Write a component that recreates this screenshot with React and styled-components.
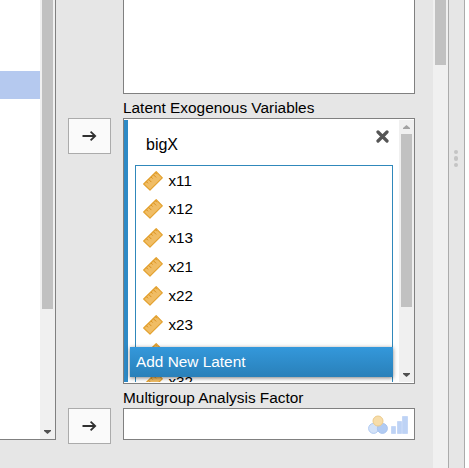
import React from "react";
import styled, { createGlobalStyle } from "styled-components";

const GlobalStyle = createGlobalStyle`
  * { box-sizing: border-box; }
  body { margin: 0; background: #fff; }
`;

const Screen = styled.div`
  display: flex;
  width: 469px;
  height: 468px;
  overflow: hidden;
  background: #fff;
  color: #000;
  font: 15.4px/18px "Liberation Sans", Arial, sans-serif;
`;

const Form = styled.main`
  display: flex;
  width: 433px;
  background: #e6e6e6;
`;

const SourceList = styled.div`
  display: flex;
  width: 56px;
  height: 440px;
  background: #fff;
  border: solid #808080;
  border-width: 0 1px 1px 0;
`;

const SourceItems = styled.div`
  flex: 1;
  padding-top: 71px;
`;

const SelectedItem = styled.div`
  height: 28px;
  background: #b5c9ef;
`;

const Track = styled.div`
  display: flex;
  flex-direction: column;
  flex: none;
  width: 15px;
  height: 100%;
  background: #f0f0f0;
`;

const Thumb = styled.div`
  width: 11px;
  height: ${(p) => p.$length}px;
  margin-left: 2px;
  background: #c1c1c1;
`;

const ArrowCap = styled.svg`
  display: block;
  flex: none;
  width: 15px;
  height: 14px;
  margin-top: ${(p) => (p.$end ? "auto" : "0")};
  fill: ${(p) => (p.$end ? "#505050" : "#a3a3a3")};
`;

const Assign = styled.div`
  display: flex;
  flex-direction: column;
  gap: 254px;
  padding: 118px 12px 0;
`;

const AssignButton = styled.button`
  display: flex;
  align-items: center;
  justify-content: center;
  width: 43px;
  height: 36px;
  padding: 0;
  background: #fafafa;
  border: 1px solid #ababab;
`;

const Fields = styled.section`
  width: 292px;
`;

const Box = styled.div`
  display: flex;
  height: ${(p) => p.$height}px;
  background: #fff;
  border: 1px solid #808080;
  ${(p) => p.$cut && "border-top: 0;"}
`;

const Label = styled.div`
  height: 24px;
  padding-top: 5px;
  white-space: nowrap;
`;

const LatentBox = styled(Box)`
  position: relative;
  padding: 1px 0;
  overflow: hidden;
`;

const Latent = styled.div`
  flex: 1;
  height: 262px;
  padding: 0 6px 0 7px;
  overflow: hidden;
  border-left: 4px solid #2e8ac6;
`;

const LatentHeader = styled.div`
  display: flex;
  justify-content: space-between;
  height: 45px;
  padding: 16px 4px 0 11px;
  font-size: 16px;
`;

const CloseIcon = styled.svg`
  width: 13px;
  height: 13px;
  margin-top: -6px;
`;

const Variables = styled.div`
  height: 240px;
  padding: 0.25px 0 0 7px;
  border: 1px solid #3088bb;
`;

const Variable = styled.div`
  display: flex;
  align-items: center;
  gap: 5.5px;
  height: 28.8px;
  font-size: 15.2px;
`;

const AddButton = styled.button`
  position: absolute;
  left: 6px;
  bottom: 6px;
  width: 263px;
  height: 30px;
  padding: 0 6px 1px;
  border: 0;
  color: #fff;
  font: inherit;
  text-align: left;
  background: linear-gradient(#3498db, #2980b9);
  box-shadow: 0 1px 4px rgba(0, 0, 0, 0.5);
`;

const FactorBox = styled(Box)`
  align-items: center;
  justify-content: flex-end;
  gap: 3px;
  padding: 2px 6px 0 0;
`;

const Splitter = styled.div`
  display: flex;
  flex-direction: column;
  gap: 2px;
  width: 17px;
  padding: 150px 0 0 5px;
  background: #e6e6e6;
  border: solid #ababab;
  border-width: 0 1px;
`;

const Dot = styled.i`
  width: 4.4px;
  height: 4.4px;
  border-radius: 50%;
  background: #c4c4c4;
`;

const Ruler = () => (
  <svg width="20" height="20" viewBox="0 0 20 20">
    <path d="M.7 13 13.2.7l6.1 6.1L7 19.1Z" fill="#f0bd65" stroke="#e3a02c" strokeWidth="1.2" strokeLinejoin="round" />
    <path d="m3.4 10.7 1.6 1.6M5.7 8.4l2.7 2.7M8.1 6l1.6 1.6M10.4 3.7l2.7 2.7M12.5 1.8l1.4 1.4" stroke="#d98f1d" fill="none" />
  </svg>
);

const Arrow = () => (
  <svg width="15" height="12" viewBox="0 0 15 12" fill="none" stroke="#303030" strokeWidth="1.8">
    <path d="M.5 6h13M8.6 1.6 13.2 6l-4.6 4.4" />
  </svg>
);

const Up = () => (
  <ArrowCap viewBox="0 0 15 14"><path d="M4 9h7V8L7.5 5 4 8Z" /></ArrowCap>
);

const Down = () => (
  <ArrowCap $end viewBox="0 0 15 14"><path d="M4 5h7v1L7.5 9 4 6Z" /></ArrowCap>
);

const Nominal = () => (
  <svg width="20" height="20" viewBox="0 0 20 20">
    <circle cx="5.6" cy="13.4" r="5" fill="#d3e2f8" stroke="#b0caf2" />
    <circle cx="14.4" cy="13.4" r="5" fill="#b1cbf3" stroke="#a9c4ef" />
    <circle cx="10" cy="6" r="5" fill="#f7ddaa" stroke="#eccb8c" />
  </svg>
);

const Ordinal = () => (
  <svg width="17" height="18" viewBox="0 0 17 18" fill="#bed3f5" stroke="#c6d8f7">
    <path d="M.5 10.5h4v7h-4ZM6.5 5.5h4v12h-4ZM11.5.5h5v17h-5Z" />
  </svg>
);

const variables = ["x11", "x12", "x13", "x21", "x22", "x23", "x31", "x32"];

export default function App() {
  return (
    <Screen>
      <GlobalStyle />
      <Form>
        <SourceList>
          <SourceItems><SelectedItem /></SourceItems>
          <Track><Thumb $length={309} /><Down /></Track>
        </SourceList>
        <Assign>
          <AssignButton><Arrow /></AssignButton>
          <AssignButton><Arrow /></AssignButton>
        </Assign>
        <Fields>
          <Box $height={94} $cut />
          <Label>Latent Exogenous Variables</Label>
          <LatentBox $height={266}>
            <Latent>
              <LatentHeader>
                bigX
                <CloseIcon viewBox="0 0 13 13">
                  <path d="m2 2 9 9M11 2l-9 9" stroke="#555" strokeWidth="3.2" strokeLinecap="round" />
                </CloseIcon>
              </LatentHeader>
              <Variables>
                {variables.map((name) => (
                  <Variable key={name}><Ruler />{name}</Variable>
                ))}
              </Variables>
            </Latent>
            <Track><Up /><Thumb $length={173} /><Down /></Track>
            <AddButton>Add New Latent</AddButton>
          </LatentBox>
          <Label>Multigroup Analysis Factor</Label>
          <FactorBox $height={32}><Nominal /><Ordinal /></FactorBox>
        </Fields>
      </Form>
      <Track><Thumb $length={65} /></Track>
      <Splitter><Dot /><Dot /><Dot /></Splitter>
    </Screen>
  );
}
